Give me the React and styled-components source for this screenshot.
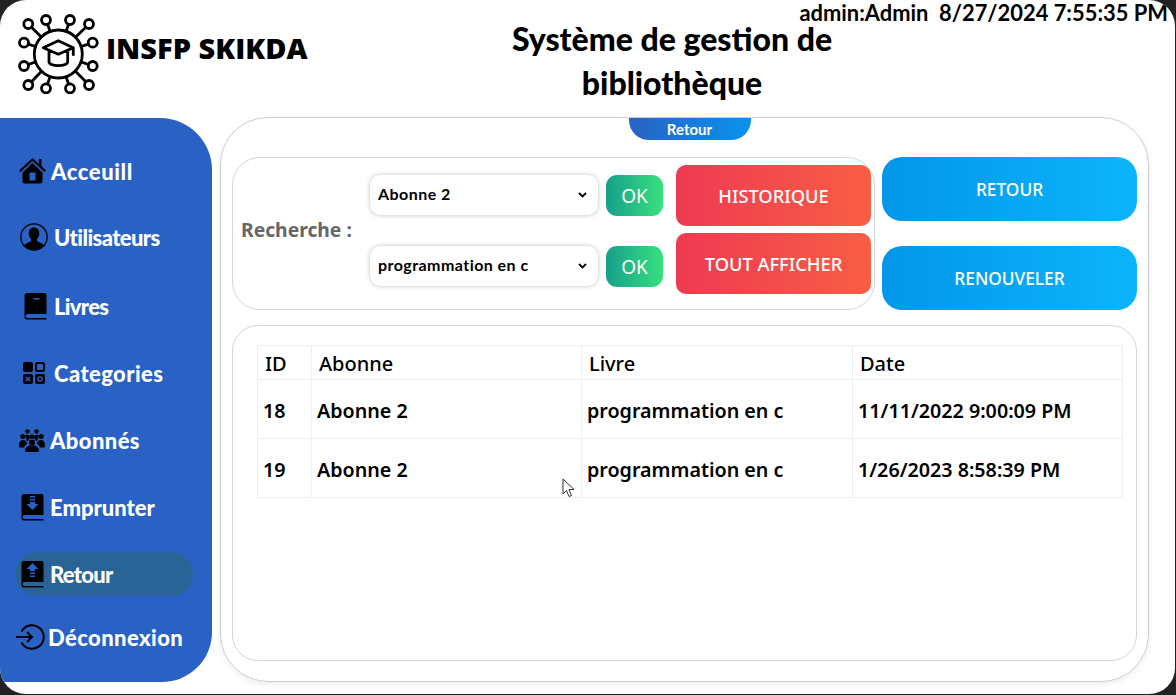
import React from "react";
import styled, { createGlobalStyle } from "styled-components";

const GlobalStyle = createGlobalStyle`
  html, body {
    margin: 0;
    background: #222;
    overflow: hidden;
  }
  * {
    box-sizing: border-box;
  }
`;

const geo = `Lato, "Liberation Sans", sans-serif`;
const ui = `"Noto Sans", "Open Sans", sans-serif`;

const chevron = encodeURIComponent(
  `<svg xmlns="http://www.w3.org/2000/svg" width="9" height="6" viewBox="0 0 9 6"><path d="M1 1l3.500 3.500L8 1" fill="none" stroke="#000" stroke-width="1.800"/></svg>`
);

const Window = styled.div`
  position: relative;
  width: 1175px;
  height: 694px;
  background: #fff;
  border-radius: 26px;
  overflow: hidden;
  display: flex;
  flex-direction: column;
`;

const Header = styled.header`
  position: relative;
  height: 118px;
  flex: none;
  display: flex;
  align-items: flex-start;
  padding: 14px 0 0 18px;
`;

const Logo = styled.svg`
  width: 82px;
  height: 80px;
  flex: none;
`;

const Brand = styled.div`
  margin: 14px 0 0 6px;
  width: 260px;
  flex: none;
  font: 800 29px/40px "Open Sans", sans-serif;
  color: #000;
`;

const Title = styled.h1`
  margin: 3px 0 0 136px;
  width: 340px;
  flex: none;
  text-align: center;
  font: 900 32px/44px ${geo};
  color: #000;
`;

const Status = styled.div`
  position: absolute;
  top: 0;
  right: 7px;
  font: 700 21.900px/25px ${geo};
  color: #000;
  white-space: pre;
`;

const Body = styled.div`
  flex: none;
  height: 564px;
  display: flex;
  gap: 8px;
`;

const Sidebar = styled.nav`
  width: 212px;
  flex: none;
  background: #2962c4;
  border-radius: 0 52px 50px 0;
  padding: 31px 19px 0 15px;
  display: flex;
  flex-direction: column;
`;

const NavItem = styled.div`
  height: 44px;
  margin-top: ${(p) => p.$top}px;
  border-radius: 22px;
  display: flex;
  align-items: center;
  gap: 1px;
  color: #fff;
  font: 900 22px ${geo};
  letter-spacing: ${(p) => p.$track}px;
  background: ${(p) => (p.$active ? "#2a6496" : "transparent")};
`;

const IconSlot = styled.span`
  width: ${(p) => p.$width}px;
  padding-left: ${(p) => p.$inset}px;
  flex: none;
  display: flex;
  align-items: center;
`;

const NavIcon = styled.svg`
  display: block;
  flex: none;
  overflow: visible;
`;

const Panel = styled.main`
  position: relative;
  width: 929px;
  margin-top: -1px;
  flex: none;
  border: 1px solid #ccc;
  border-radius: 48px;
  box-shadow: 0 2px 6px rgba(0, 0, 0, 0.08);
  padding: 0 11px;
  display: flex;
  flex-direction: column;
`;

const Tab = styled.div`
  align-self: center;
  margin-left: 10px;
  width: 122px;
  height: 22px;
  flex: none;
  border-radius: 0 0 20px 20px;
  background: linear-gradient(90deg, #2962c4, #0a93ec);
  color: #fff;
  text-align: center;
  font: 700 15px/23px ${geo};
`;

const TopRow = styled.div`
  margin-top: 17px;
  display: flex;
  gap: 7px;
`;

const SearchBox = styled.section`
  width: 643px;
  height: 153px;
  flex: none;
  border: 1px solid #d5d5d5;
  border-radius: 28px;
  padding: 6px 3px 0 8px;
  display: grid;
  grid-template-columns: 129px 228px 65px 208px;
  grid-template-rows: 1fr 1fr;
`;

const SearchLabel = styled.div`
  grid-row: 1 / span 2;
  align-self: center;
  margin-top: -14px;
  font: 700 19.300px ${ui};
  color: #666;
`;

const SelectCell = styled.div`
  align-self: start;
  margin-top: ${(p) => p.$top}px;
`;

const Picker = styled.select`
  appearance: none;
  width: 228px;
  height: 40px;
  border: none;
  border-radius: 10px;
  background: #fff url("data:image/svg+xml,${chevron}") no-repeat 208px 17px;
  box-shadow: 0 0 5px rgba(0, 0, 0, 0.25);
  padding: 0 24px 4px 8px;
  font: 700 16px ${geo};
  letter-spacing: 0.45px;
  color: #000;
  outline: none;
`;

const OkButton = styled.button`
  width: 57px;
  height: 41px;
  margin: ${(p) => p.$top}px 0 0 8px;
  border: none;
  border-radius: 11px;
  background: linear-gradient(90deg, #17a08a, #38e07f);
  color: #fff;
  padding: 2px 0 0;
  font: 400 19px ${ui};
  align-self: start;
`;

const RedButton = styled.button`
  width: 195px;
  height: 61px;
  margin: ${(p) => p.$top}px 0 0 13px;
  border: none;
  border-radius: 10px;
  background: linear-gradient(90deg, #ee3a52, #f85e44);
  color: #fff;
  padding: ${(p) => p.$shift}px 0 0;
  font: 500 18.300px ${ui};
  align-self: start;
`;

const ActionColumn = styled.div`
  flex: 1;
  display: flex;
  flex-direction: column;
  justify-content: space-between;
  height: 153px;
`;

const BlueButton = styled.button`
  width: 255px;
  height: 64px;
  border: none;
  border-radius: 20px;
  background: linear-gradient(90deg, #0396ea, #0bb5fb);
  color: #fff;
  padding: ${(p) => p.$shift}px 0 0;
  font: 500 17.300px ${ui};
`;

const TableBox = styled.section`
  margin-top: 15px;
  height: 336px;
  width: 905px;
  border: 1px solid #d5d5d5;
  border-radius: 26px;
  padding: 19px 13px 0 24px;
`;

const Table = styled.table`
  width: 865px;
  border-collapse: collapse;
  table-layout: fixed;
  color: #000;
`;

const Th = styled.th`
  width: ${(p) => p.$width}px;
  height: 34px;
  border: 1px solid #eee;
  padding: 2px 0 0 7px;
  text-align: left;
  font: 500 20px ${ui};
`;

const Td = styled.td`
  height: 59px;
  border: 1px solid #eee;
  padding: 3px 0 0 5px;
  font: 600 19.700px ${ui};
`;

const Cursor = styled.svg`
  position: absolute;
  left: 341px;
  top: 360px;
`;

const blue = "#2962c4";

const HomeIcon = () => (
  <NavIcon width="27" height="26" viewBox="0 0 27 26">
    <path d="M20 1h2.500v7l4.500 4.500-1.600 1.600L13.500 3 1.600 14.100 0 12.500 13.500 0 20 6z" fill="#000" />
    <path d="M3.500 14.500 13.500 5l10 9.500V23a2.500 2.500 0 0 1-2.500 2.500H6A2.500 2.500 0 0 1 3.500 23z" fill="#000" />
    <rect x="10.500" y="14.500" width="6" height="8" rx="0.500" fill={blue} />
  </NavIcon>
);

const UserIcon = () => (
  <NavIcon width="28" height="28" viewBox="0 0 28 28">
    <circle cx="14" cy="14" r="13.200" fill="none" stroke="#000" strokeWidth="1.300" />
    <path d="M14 4.500c3.400 0 5.200 2.600 5.200 5.800 0 2.400-1 4.700-2.300 5.800v2c1.500 1.300 5 2 7 4a13 13 0 0 1-19.800 0c2-2 5.500-2.700 7-4v-2c-1.300-1.100-2.300-3.400-2.300-5.800 0-3.200 1.800-5.800 5.200-5.800z" fill="#000" />
  </NavIcon>
);

const Book = ({ children }) => (
  <NavIcon width="23" height="27" viewBox="0 0 23 27">
    <path d="M3 0h17.500A2 2 0 0 1 22.500 2v19H3.500a2 2 0 0 0 0 4h19v1.500H3A2.500 2.500 0 0 1 .5 24V2.500A2.500 2.500 0 0 1 3 0z" fill="#000" />
    {children}
  </NavIcon>
);

const BookIcon = () => (
  <Book>
    <rect x="9.500" y="5" width="6" height="1.500" fill={blue} />
  </Book>
);

const BorrowIcon = () => (
  <Book>
    <path d="M9 2h5v1.500H9zM9 5h5v1.500H9zM9 8h5v2h3.500l-6 6-6-6H9z" fill={blue} />
  </Book>
);

const ReturnIcon = () => (
  <Book>
    <path d="M11.500 2l6 6H14v2H9V8H5.500zM9 11.500h5V13H9zM9 14.500h5V16H9z" fill={blue} />
  </Book>
);

const CategoryIcon = () => (
  <NavIcon width="22" height="22" viewBox="0 0 22 22">
    <rect x="0" y="0" width="10" height="10" rx="2" fill="#000" />
    <rect x="13" y="1" width="8" height="8" rx="1.500" fill="none" stroke="#000" strokeWidth="2" />
    <rect x="0" y="12" width="10" height="10" rx="2" fill="#000" />
    <path d="M3 15l4 4M7 15l-4 4" stroke={blue} strokeWidth="1.500" />
    <rect x="12" y="12" width="10" height="10" rx="2" fill="#000" />
    <circle cx="17" cy="17" r="2" fill="none" stroke={blue} strokeWidth="1.500" />
  </NavIcon>
);

const GroupIcon = () => (
  <NavIcon width="26" height="23" viewBox="0 0 26 23">
    <g fill="#000">
      <circle cx="8.500" cy="2.500" r="2.300" />
      <circle cx="17.500" cy="2.500" r="2.300" />
      <circle cx="3.800" cy="7.500" r="2.500" />
      <circle cx="22.200" cy="7.500" r="2.500" />
      <circle cx="13" cy="7.500" r="2.300" />
      <circle cx="13" cy="13.500" r="3" />
      <path d="M0 16c0-3 1.500-5 4-5s4 1.500 4 4c-1.500 1-2.500 2-3 3.500H1a1 1 0 0 1-1-1z" />
      <path d="M26 16c0-3-1.500-5-4-5s-4 1.500-4 4c1.500 1 2.500 2 3 3.500h4a1 1 0 0 0 1-1z" />
      <path d="M6 21.500c0-3 2.500-5 7-5s7 2 7 5c0 1-1 1.500-2 1.500H8c-1 0-2-.5-2-1.500z" />
      <path d="M6 6h4l1.500 3c-1.500 1-2 2-2.500 3H8c-.5-2-1.500-4-2-6zM20 6h-4l-1.500 3c1.500 1 2 2 2.500 3h1c.5-2 1.500-4 2-6z" />
    </g>
  </NavIcon>
);

const LogoutIcon = () => (
  <NavIcon width="27" height="26" viewBox="0 0 27 26" fill="none" stroke="#000" strokeWidth="2">
    <path d="M5.500 7.500A11.800 11.800 0 1 1 5.500 18.500" />
    <path d="M0 13h16M11 8l5 5-5 5" />
  </NavIcon>
);

const navItems = [
  { label: "Acceuill", icon: HomeIcon, top: 0, slot: 35, inset: 4, track: 0.6 },
  { label: "Utilisateurs", icon: UserIcon, top: 22, slot: 38, inset: 5, track: -0.6 },
  { label: "Livres", icon: BookIcon, top: 25, slot: 38, inset: 9, track: -0.7 },
  { label: "Categories", icon: CategoryIcon, top: 23, slot: 38, inset: 8, track: 0.4 },
  { label: "Abonnés", icon: GroupIcon, top: 23, slot: 34, inset: 4, track: 0.4 },
  { label: "Emprunter", icon: BorrowIcon, top: 23, slot: 34, inset: 6, track: 0 },
  { label: "Retour", icon: ReturnIcon, top: 23, slot: 34, inset: 6, track: -0.7, active: true },
  { label: "Déconnexion", icon: LogoutIcon, top: 19, slot: 32, inset: 1, track: 0.4 },
];

const rows = [
  { id: 18, abonne: "Abonne 2", livre: "programmation en c", date: "11/11/2022 9:00:09 PM" },
  { id: 19, abonne: "Abonne 2", livre: "programmation en c", date: "1/26/2023 8:58:39 PM" },
];

const nodes = [
  [10.3, 10], [28, 6], [52, 6], [71, 10], [6, 28.7], [74.7, 28.7],
  [6, 52], [74.7, 52], [10.3, 71], [28, 74.3], [52, 74.3], [71, 71],
];

const LogoMark = () => (
  <Logo viewBox="0 0 82 80" fill="none" stroke="#000" strokeWidth="2.800" strokeLinecap="round" strokeLinejoin="round">
    <circle cx="40.300" cy="40" r="24" />
    {nodes.map(([x, y]) => {
      const dx = x - 40.3;
      const dy = y - 40;
      const len = Math.hypot(dx, dy);
      return (
        <g key={`${x}-${y}`}>
          <line
            x1={40.3 + (dx / len) * 24}
            y1={40 + (dy / len) * 24}
            x2={40.3 + (dx / len) * (len - 4.5)}
            y2={40 + (dy / len) * (len - 4.5)}
          />
          <circle cx={x} cy={y} r="4.500" />
        </g>
      );
    })}
    <path d="M25.300 33.700 40.300 26.700l15 7-15 6.600zM31 37v10.700c0 2 3.500 4 9.300 4s9.400-2 9.400-4V37M55.300 33.700v7" />
  </Logo>
);

const App = () => (
  <>
    <GlobalStyle />
    <Window>
      <Header>
        <LogoMark />
        <Brand>INSFP SKIKDA</Brand>
        <Title>Système de gestion de bibliothèque</Title>
        <Status>{"admin:Admin  8/27/2024 7:55:35 PM"}</Status>
      </Header>
      <Body>
        <Sidebar>
          {navItems.map(({ label, icon: Icon, top, slot, inset, track, active }) => (
            <NavItem key={label} $top={top} $track={track} $active={active}>
              <IconSlot $width={slot} $inset={inset}>
                <Icon />
              </IconSlot>
              {label}
            </NavItem>
          ))}
        </Sidebar>
        <Panel>
          <Tab>Retour</Tab>
          <TopRow>
            <SearchBox>
              <SearchLabel>Recherche :</SearchLabel>
              <SelectCell $top={11}>
                <Picker defaultValue="Abonne 2">
                  <option>Abonne 2</option>
                </Picker>
              </SelectCell>
              <OkButton $top={10.5}>OK</OkButton>
              <RedButton $top={0.5} $shift={1}>HISTORIQUE</RedButton>
              <SelectCell $top={9.5}>
                <Picker defaultValue="programmation en c">
                  <option>programmation en c</option>
                </Picker>
              </SelectCell>
              <OkButton $top={9}>OK</OkButton>
              <RedButton $top={-4} $shift={0}>TOUT AFFICHER</RedButton>
            </SearchBox>
            <ActionColumn>
              <BlueButton $shift={0}>RETOUR</BlueButton>
              <BlueButton $shift={1}>RENOUVELER</BlueButton>
            </ActionColumn>
          </TopRow>
          <TableBox>
            <Table>
              <thead>
                <tr>
                  <Th $width={54}>ID</Th>
                  <Th $width={270}>Abonne</Th>
                  <Th $width={271}>Livre</Th>
                  <Th $width={270}>Date</Th>
                </tr>
              </thead>
              <tbody>
                {rows.map((row) => (
                  <tr key={row.id}>
                    <Td>{row.id}</Td>
                    <Td>{row.abonne}</Td>
                    <Td>{row.livre}</Td>
                    <Td>{row.date}</Td>
                  </tr>
                ))}
              </tbody>
            </Table>
          </TableBox>
          <Cursor width="13" height="20" viewBox="0 0 13 20">
            <path d="M1 1v15l3.500-3.500 2.500 6 2.500-1-2.500-6H12z" fill="#fff" stroke="#333" strokeWidth="1" />
          </Cursor>
        </Panel>
      </Body>
    </Window>
  </>
);

export default App;
